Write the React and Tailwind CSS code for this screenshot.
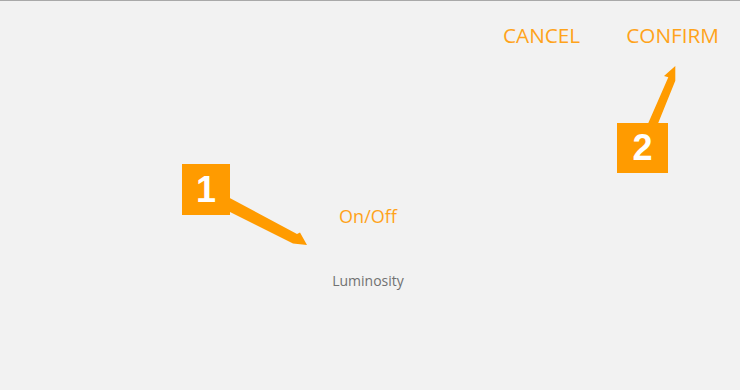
import React from "react";

export default function App() {
  return (
    <div className="relative w-[740px] h-[390px] overflow-hidden bg-[#f2f2f2] border-t border-[#a9a9a9]" style={{ fontFamily: '"Open Sans", "Noto Sans", sans-serif' }}>
      <div className="flex justify-end gap-[46px] pr-[21px] pt-[20px]">
        <button className="text-[20.75px] leading-[28px] text-[#ffa31a]">CANCEL</button>
        <button className="text-[20.75px] leading-[28px] text-[#ffa31a]">CONFIRM</button>
      </div>
      <div className="flex flex-col items-center pr-[4px] mt-[155px]">
        <div className="text-[18px] leading-[25px] text-[#ffa31a]">On/Off</div>
        <div className="mt-[42px] text-[14px] leading-[19px] text-[#717171]">Luminosity</div>
      </div>

      <svg className="absolute left-0 top-[-1px]" width="740" height="390" viewBox="0 0 740 390">
        <polygon fill="#ff9b00" points="226,196 297,234 300,232.5 307,245 293,243.5 226,210" />
        <polygon fill="#ff9b00" points="675.3,66 664,76 668.3,77.3 647,126 657,126 675.3,80.7" />
      </svg>

      <div className="absolute left-[182px] top-[163px] w-[48px] h-[51px] bg-[#ff9b00] flex items-center justify-center">
        <span className="text-white font-bold text-[36px] leading-none" style={{ fontFamily: '"Liberation Sans", Arial, sans-serif' }}>1</span>
      </div>
      <div className="absolute left-[617px] top-[122px] w-[51px] h-[50px] bg-[#ff9b00] flex items-center justify-center">
        <span className="text-white font-bold text-[36px] leading-none" style={{ fontFamily: '"Liberation Sans", Arial, sans-serif' }}>2</span>
      </div>
    </div>
  );
}
